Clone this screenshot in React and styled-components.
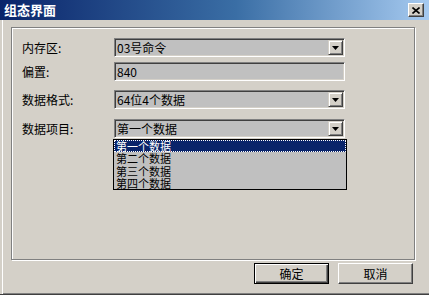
import React from "react";
import styled, { createGlobalStyle } from "styled-components";

const GlobalStyle = createGlobalStyle`
  html, body { margin: 0; padding: 0; background: #d4d0c8; }
  body { font-family: "Noto Sans CJK SC", "Liberation Sans", sans-serif; font-size: 12px; }
`;

const FONT = `"Noto Sans CJK SC", "Liberation Sans", sans-serif`;

const Window = styled.div`
  width: 429px;
  height: 295px;
  box-sizing: border-box;
  background: #d4d0c8;
  display: flex;
  flex-direction: column;
  border-bottom: 1px solid #404040;
  box-shadow: inset 0 -1px 0 #808080;
  font-family: ${FONT};
  color: #000;
`;

const TitleBar = styled.div`
  height: 20px;
  flex: none;
  display: flex;
  align-items: center;
  justify-content: space-between;
  padding: 0 5px 0 4px;
  background: linear-gradient(to right, #0a246a 0%, #3a6ea5 55%, #a6caf0 100%);
`;

const Title = styled.span`
  color: #fff;
  font-weight: bold;
  font-size: 13px;
  line-height: 20px;
`;

const CloseButton = styled.div`
  width: 16px;
  height: 14px;
  box-sizing: border-box;
  background: #d4d0c8;
  border: 1px solid;
  border-color: #fff #404040 #404040 #fff;
  box-shadow: inset -1px -1px 0 #808080;
  display: flex;
  align-items: center;
  justify-content: center;
`;

const Body = styled.div`
  flex: 1;
  display: flex;
  flex-direction: column;
  padding: 7px 14px 0 11px;
  box-shadow: inset 2px 0 0 #d4d0c8, inset 3px 0 0 #fff;
`;

const GroupBox = styled.div`
  height: 233px;
  box-sizing: border-box;
  border: 1px solid #808080;
  box-shadow: inset 1px 1px 0 #fff, 1px 1px 0 #fff;
  padding: 10px 0 0 10px;
  display: flex;
  flex-direction: column;
`;

const Row = styled.div`
  display: flex;
  align-items: center;
  margin-top: ${(p) => p.$gap || 0}px;
`;

const Label = styled.span`
  width: 92px;
  flex: none;
  font-size: 12px;
  line-height: 14px;
`;

const Field = styled.div`
  position: relative;
  width: 231px;
  height: 19px;
  box-sizing: border-box;
  background: #c0c0c0;
  border: 1px solid;
  border-color: #808080 #fff #fff #808080;
  box-shadow: inset 1px 1px 0 #404040, inset -1px -1px 0 #d4d0c8;
  display: flex;
  align-items: center;
  padding-left: 2px;
  font-size: 12px;
  line-height: 14px;
`;

const DropButton = styled.div`
  position: absolute;
  right: 1px;
  top: 1px;
  width: 15px;
  height: 15px;
  box-sizing: border-box;
  background: #d4d0c8;
  border: 1px solid;
  border-color: #d4d0c8 #404040 #404040 #d4d0c8;
  box-shadow: inset 1px 1px 0 #fff, inset -1px -1px 0 #808080;
  display: flex;
  align-items: center;
  justify-content: center;
`;

const ListWrap = styled.div`
  display: flex;
  padding-left: 91px;
  margin-top: 1px;
`;

const ListBox = styled.div`
  width: 234px;
  height: 51px;
  box-sizing: border-box;
  border: 1px solid #000;
  background: #c0c0c0;
  display: flex;
  flex-direction: column;
`;

const ListItem = styled.div`
  height: 12.25px;
  box-sizing: border-box;
  padding-left: 2px;
  font-size: 11px;
  line-height: 12px;
  white-space: nowrap;
  color: ${(p) => (p.$selected ? "#fff" : "#000")};
  background: ${(p) => (p.$selected ? "#0a246a" : "transparent")};
  outline: ${(p) => (p.$selected ? "1px dotted #fff" : "none")};
  outline-offset: -1px;
`;

const Footer = styled.div`
  display: flex;
  justify-content: flex-end;
  gap: 9px;
  padding: 3px 2px 0 0;
`;

const Button = styled.div`
  width: 75px;
  height: 21px;
  box-sizing: border-box;
  background: #d4d0c8;
  display: flex;
  align-items: center;
  justify-content: center;
  font-size: 12px;
  border: 1px solid ${(p) => (p.$default ? "#000" : "#fff")};
  ${(p) =>
    p.$default
      ? "box-shadow: inset 1px 1px 0 #fff, inset -1px -1px 0 #404040, inset -2px -2px 0 #808080;"
      : "border-color: #fff #404040 #404040 #fff; box-shadow: inset -1px -1px 0 #808080;"}
`;

const Arrow = () => (
  <svg width="7" height="4" viewBox="0 0 7 4">
    <path d="M0 0h7L3.5 4z" fill="#000" />
  </svg>
);

const CloseX = () => (
  <svg width="8" height="7" viewBox="0 0 8 7">
    <path d="M0.5 0.5l7 6M7.5 0.5l-7 6" stroke="#000" strokeWidth="1.6" />
  </svg>
);

const Combo = ({ value }) => (
  <Field>
    {value}
    <DropButton>
      <Arrow />
    </DropButton>
  </Field>
);

const items = ["第一个数据", "第二个数据", "第三个数据", "第四个数据"];

export default function App() {
  return (
    <>
      <GlobalStyle />
      <Window>
        <TitleBar>
          <Title>组态界面</Title>
          <CloseButton>
            <CloseX />
          </CloseButton>
        </TitleBar>
        <Body>
          <GroupBox>
            <Row>
              <Label>内存区:</Label>
              <Combo value="03号命令" />
            </Row>
            <Row $gap={5}>
              <Label>偏置:</Label>
              <Field>840</Field>
            </Row>
            <Row $gap={9}>
              <Label>数据格式:</Label>
              <Combo value="64位4个数据" />
            </Row>
            <Row $gap={10}>
              <Label>数据项目:</Label>
              <Combo value="第一个数据" />
            </Row>
            <ListWrap>
              <ListBox>
                {items.map((it, i) => (
                  <ListItem key={it} $selected={i === 0}>
                    {it}
                  </ListItem>
                ))}
              </ListBox>
            </ListWrap>
          </GroupBox>
          <Footer>
            <Button $default>确定</Button>
            <Button>取消</Button>
          </Footer>
        </Body>
      </Window>
    </>
  );
}
